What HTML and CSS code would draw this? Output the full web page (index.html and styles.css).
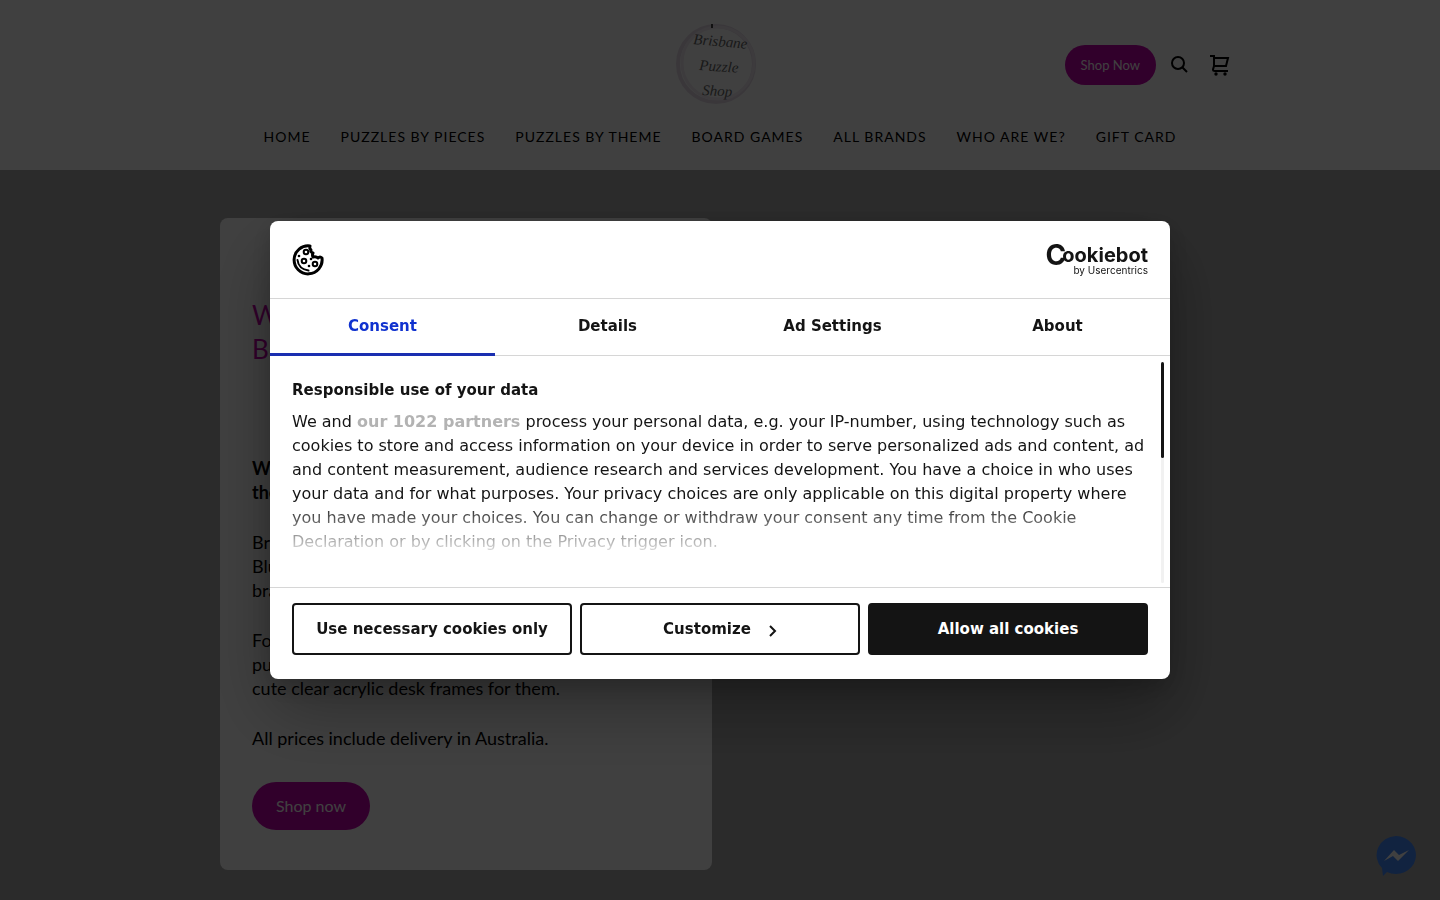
FILE: index.html
```html
<!DOCTYPE html>
<html lang="en">

<head>
    <meta charset="UTF-8">
    <meta name="viewport" content="width=device-width, initial-scale=1">
    <title>Brisbane Puzzle Shop</title>
    <link rel="stylesheet" href="styles.css">
</head>

<body>

    <header class="site-header">
        <div class="header-top">
            <a class="logo" href="#" aria-label="Brisbane Puzzle Shop">
                <svg width="84" height="82" viewBox="0 0 84 82">
                    <circle cx="41" cy="40" r="38" fill="none" stroke="#e6dce8" stroke-width="4"/>
                    <circle cx="43" cy="39" r="36" fill="none" stroke="#f2eaf3" stroke-width="3"/>
                    <path d="M37 0v4" stroke="#444" stroke-width="2"/>
                    <g class="logo-text">
                        <text x="18" y="20" transform="rotate(5 18 20)">Brisbane</text>
                        <text x="24" y="46" transform="rotate(4 24 46)">Puzzle</text>
                        <text x="27" y="71" transform="rotate(3 27 71)">Shop</text>
                    </g>
                </svg>
            </a>
            <div class="header-actions">
                <a class="pill pill-small" href="#">Shop Now</a>
                <button class="icon-button" aria-label="Search">
                    <svg width="20" height="20" viewBox="0 0 20 20" fill="none" stroke="#000" stroke-width="2">
                        <circle cx="8" cy="8" r="6"/>
                        <path d="M12 12l5 5"/>
                    </svg>
                </button>
                <button class="icon-button" aria-label="Cart">
                    <svg width="20" height="22" viewBox="0 0 20 22" fill="none" stroke="#000" stroke-width="2">
                        <path d="M0 2h4v10l-1 3.500q0 1.500 2 1.500h13M4 4h14l-2 8H4"/>
                        <circle cx="6" cy="20" r="1.700" fill="#000" stroke="none"/>
                        <circle cx="15" cy="20" r="1.700" fill="#000" stroke="none"/>
                    </svg>
                </button>
            </div>
        </div>
        <nav class="main-nav">
            <a href="#">Home</a>
            <a href="#">Puzzles by pieces</a>
            <a href="#">Puzzles by theme</a>
            <a href="#">Board games</a>
            <a href="#">All brands</a>
            <a href="#">Who are we?</a>
            <a href="#">Gift card</a>
        </nav>
    </header>

    <main class="hero">
        <div class="hero-inner">
            <section class="card">
                <h1>Welcome to<br>Brisbane Puzzle Shop</h1>
                <p><strong>We sell puzzles and games for all of<br>the family.</strong></p>
                <p>Brands include Ravensburger,<br>Blue Opal and many other<br>brands.</p>
                <p>For those who love mini<br>puzzles we also have<br>cute clear acrylic desk frames for them.</p>
                <p>All prices include delivery in Australia.</p>
                <a class="pill" href="#">Shop now</a>
            </section>
        </div>
    </main>

    <button class="chat" aria-label="Messenger">
        <svg width="40" height="40" viewBox="0 0 40 40">
            <path d="M20 0a20 19 0 1 1-9 36l-4 4-1-8A20 19 0 0 1 20 0z" fill="#448aff"/>
            <path d="M8 25l10-11 5 5 10-5-11 11-5-5z" fill="#fff"/>
        </svg>
    </button>

    <div class="overlay">
        <div class="dialog" role="dialog" aria-label="Cookie consent">
            <div class="dialog-header">
                <svg width="32" height="32" viewBox="0 0 32 32" fill="none" stroke="#000" stroke-width="2">
                    <path d="M18 2A14 14 0 1 0 30 14q-2-2-4 0-2-2-5-1-1-2 0-4-3-1-2-3-2-2-1-4z" stroke-width="3" stroke-linejoin="round"/>
                    <circle cx="14" cy="8" r="2.300"/>
                    <circle cx="12" cy="17" r="2.300"/>
                    <circle cx="23" cy="20" r="2.300"/>
                    <path d="M5.500 16q1 9 11 10.500" stroke-linecap="round"/>
                    <g fill="#000" stroke="none">
                        <circle cx="7" cy="12" r="1.300"/>
                        <circle cx="19" cy="15" r="1.300"/>
                        <circle cx="17" cy="22" r="1.300"/>
                    </g>
                </svg>
                <a class="brand" href="#">
                    <span class="brand-name"><span class="brand-c">C</span>ookiebot</span>
                    <span class="brand-by">by Usercentrics</span>
                </a>
            </div>

            <div class="tabs" role="tablist">
                <button class="tab active" role="tab">Consent</button>
                <button class="tab" role="tab">Details</button>
                <button class="tab" role="tab">Ad Settings</button>
                <button class="tab" role="tab">About</button>
            </div>

            <div class="dialog-body">
                <div class="consent-text">
                    <h2>Responsible use of your data</h2>
                    <p>We and <a href="#">our 1022 partners</a> process your personal data, e.g. your IP-number, using technology such as cookies to store and access information on your device in order to serve personalized ads and content, ad and content measurement, audience research and services development. You have a choice in who uses your data and for what purposes. Your privacy choices are only applicable on this digital property where you have made your choices. You can change or withdraw your consent any time from the Cookie Declaration or by clicking on the Privacy trigger icon.</p>
                </div>
                <div class="scroll-track"><div class="scroll-thumb"></div></div>
            </div>

            <div class="dialog-footer">
                <button class="choice">Use necessary cookies only</button>
                <button class="choice">Customize
                    <svg class="chevron" width="8" height="12" viewBox="0 0 8 12" fill="none" stroke="#141414" stroke-width="2">
                        <path d="M1 1l5 5-5 5"/>
                    </svg>
                </button>
                <button class="choice choice-dark">Allow all cookies</button>
            </div>
        </div>
    </div>

</body>
</html>
```
FILE: styles.css
```css
* {
    box-sizing: border-box;
}

body {
    margin: 0;
    min-height: 100vh;
    overflow: hidden;
    font-family: "Lato", sans-serif;
    font-size: 18px;
    line-height: 24px;
    color: #000;
    background-color: #acacac;
}

button {
    font: inherit;
    cursor: pointer;
}

a {
    text-decoration: none;
}

/* Header */
.site-header {
    background-color: #fff;
    padding: 24px 0 22px;
}

.header-top {
    display: grid;
    grid-template-columns: 1fr auto 1fr;
    align-items: center;
    max-width: 1032px;
    margin: 0 auto;
}

.logo {
    grid-column: 2;
    display: flex;
    margin-right: 6px;
}

.logo-text {
    font-family: "Liberation Serif", serif;
    font-style: italic;
    font-size: 15px;
    fill: #666;
}

.header-actions {
    display: flex;
    align-items: center;
    justify-content: flex-end;
}

.icon-button {
    display: flex;
    padding: 0 6px 0 0;
    margin-left: 14px;
    border: 0;
    background: none;
}

.pill {
    display: inline-block;
    padding: 12px 24px;
    border-radius: 24px;
    font-size: 16px;
    color: #fff;
    background-color: #c400ac;
}

.pill-small {
    padding: 8px 16px;
    font-size: 13px;
}

.main-nav {
    display: flex;
    justify-content: center;
    gap: 30px;
    margin-top: 20px;
    font-size: 14px;
    line-height: 22px;
}

.main-nav a {
    color: #000;
    text-transform: uppercase;
    letter-spacing: 1px;
}

/* Hero */
.hero {
    padding: 48px 16px 30px;
}

.hero-inner {
    max-width: 1000px;
    margin: 0 auto;
}

.card {
    max-width: 492px;
    padding: 80px 32px 40px;
    border-radius: 8px;
    background-color: #fff;
}

.card h1 {
    margin: 0 0 90px;
    font-size: 26px;
    line-height: 34px;
    font-weight: 400;
    color: #c400ac;
}

.card p {
    margin: 0 0 26px;
}

.card p:last-of-type {
    margin-bottom: 32px;
}

.chat {
    position: fixed;
    right: 24px;
    bottom: 24px;
    display: flex;
    padding: 0;
    border: 0;
    background: none;
}

/* Cookie dialog */
.overlay {
    position: fixed;
    inset: 0;
    display: flex;
    align-items: center;
    justify-content: center;
    background-color: rgba(0, 0, 0, 0.75);
}

.dialog {
    width: 100%;
    max-width: 900px;
    border-radius: 8px;
    background-color: #fff;
    box-shadow: 0 32px 68px rgba(0, 0, 0, 0.3), 0 8px 24px rgba(0, 0, 0, 0.2);
    font-family: "DejaVu Sans", sans-serif;
    font-size: 15px;
    color: #141414;
}

.dialog-header {
    display: flex;
    align-items: center;
    justify-content: space-between;
    height: 78px;
    padding: 0 22px;
    border-bottom: 1px solid #d6d6d6;
}

.brand {
    display: flex;
    flex-direction: column;
    align-items: flex-end;
    font-family: "Inter", sans-serif;
    color: #141414;
}

.brand-name {
    font-size: 20px;
    line-height: 20px;
    font-weight: 700;
}

.brand-c {
    margin-right: -4px;
    font-size: 28px;
    line-height: 16px;
    vertical-align: -3px;
}

.brand-by {
    font-size: 10px;
    line-height: 10px;
}

.tabs {
    display: flex;
    border-bottom: 1px solid #d6d6d6;
}

.tab {
    flex: 1;
    height: 56px;
    padding: 0 0 2px;
    border: 0;
    background: none;
    font-weight: 700;
    color: #141414;
}

.tab.active {
    color: #1032cf;
    box-shadow: inset 0 -2px #1a2fb0, 0 1px #1a2fb0;
}

.dialog-body {
    display: flex;
    justify-content: space-between;
    height: 231px;
    padding: 6px 6px 4px 22px;
}

.consent-text {
    padding-top: 16px;
    padding-right: 4px;
    height: 190px;
    overflow: hidden;
    -webkit-mask-image: linear-gradient(#000 140px, transparent 198px);
    mask-image: linear-gradient(#000 140px, transparent 198px);
}

.consent-text h2 {
    margin: 0 0 8px;
    font-size: 15px;
    line-height: 24px;
}

.consent-text p {
    margin: 0;
    font-size: 16px;
}

.consent-text a {
    font-weight: 700;
    color: #b3b3b3;
}

.scroll-track {
    flex: none;
    width: 3px;
    border-radius: 2px;
    background-color: #f1f1f1;
}

.scroll-thumb {
    height: 96px;
    border-radius: 2px;
    background-color: #141414;
}

.dialog-footer {
    display: flex;
    gap: 8px;
    padding: 15px 22px 24px;
    border-top: 1px solid #d6d6d6;
}

.choice {
    flex: 1;
    display: flex;
    align-items: center;
    justify-content: center;
    gap: 18px;
    height: 52px;
    padding: 0;
    border: 2px solid #141414;
    border-radius: 4px;
    background-color: #fff;
    font-weight: 700;
    color: #141414;
}

.chevron {
    margin-top: 4px;
}

.choice-dark {
    background-color: #141414;
    color: #fff;
}
```
